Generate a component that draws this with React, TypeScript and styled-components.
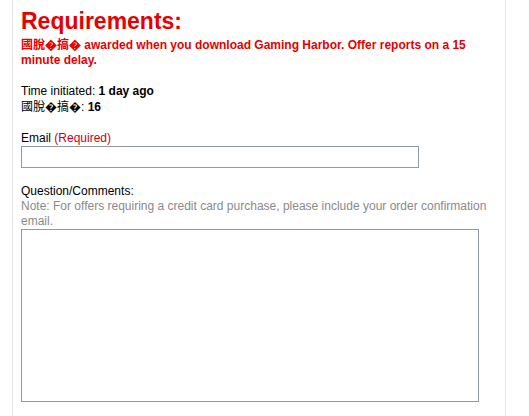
import styled, { createGlobalStyle } from 'styled-components';

const GlobalStyle = createGlobalStyle`
  html, body {
    margin: 0;
    padding: 0;
    background: #ffffff;
  }
  body {
    font-family: 'Liberation Sans', Arial, 'Noto Sans CJK SC', sans-serif;
    font-size: 12px;
    color: #000;
  }
`;

const Panel = styled.div`
  margin-left: 12px;
  width: 476px;
  min-height: 416px;
  padding: 8px 8px 0;
  border-left: 1px solid #e6e6e6;
  border-right: 1px solid #e6e6e6;
`;

const Heading = styled.h1`
  margin: 0 0 4px;
  font-size: 23px;
  line-height: 26px;
  font-weight: bold;
  color: #e60000;
`;

const Notice = styled.p`
  margin: 0 0 15px;
  font-weight: bold;
  line-height: 15px;
  color: #e60000;
`;

const Info = styled.div`
  margin-bottom: 15px;
  line-height: 16px;
`;

const Field = styled.div`
  margin-bottom: 15px;
`;

const Label = styled.label`
  display: block;
  line-height: 16px;
`;

const Required = styled.span`
  color: #c8001e;
`;

const Hint = styled.div`
  line-height: 15px;
  color: #8a8a8a;
`;

const TextInput = styled.input`
  display: block;
  box-sizing: border-box;
  width: 398px;
  height: 22px;
  margin: 0;
  padding: 2px 3px;
  border: 1px solid #8e9aa4;
  background: #fff;
  font: inherit;
  outline: none;
`;

const TextArea = styled.textarea`
  display: block;
  box-sizing: border-box;
  width: 458px;
  height: 173px;
  margin: 0;
  padding: 2px 3px;
  border: 1px solid #8e9aa4;
  background: #fff;
  font: inherit;
  resize: none;
  outline: none;
`;

export default function App() {
  return (
    <>
      <GlobalStyle />
      <Panel>
        <Heading>Requirements:</Heading>
        <Notice>
          國脫�搞� awarded when you download Gaming Harbor. Offer reports on a 15 minute delay.
        </Notice>
        <Info>
          Time initiated: <b>1 day ago</b>
          <br />
          國脫�搞�: <b>16</b>
        </Info>
        <Field>
          <Label htmlFor="email">
            Email <Required>(Required)</Required>
          </Label>
          <TextInput id="email" type="text" />
        </Field>
        <Field>
          <Label htmlFor="comments">Question/Comments:</Label>
          <Hint>Note: For offers requiring a credit card purchase, please include your order confirmation email.</Hint>
          <TextArea id="comments" />
        </Field>
      </Panel>
    </>
  );
}
